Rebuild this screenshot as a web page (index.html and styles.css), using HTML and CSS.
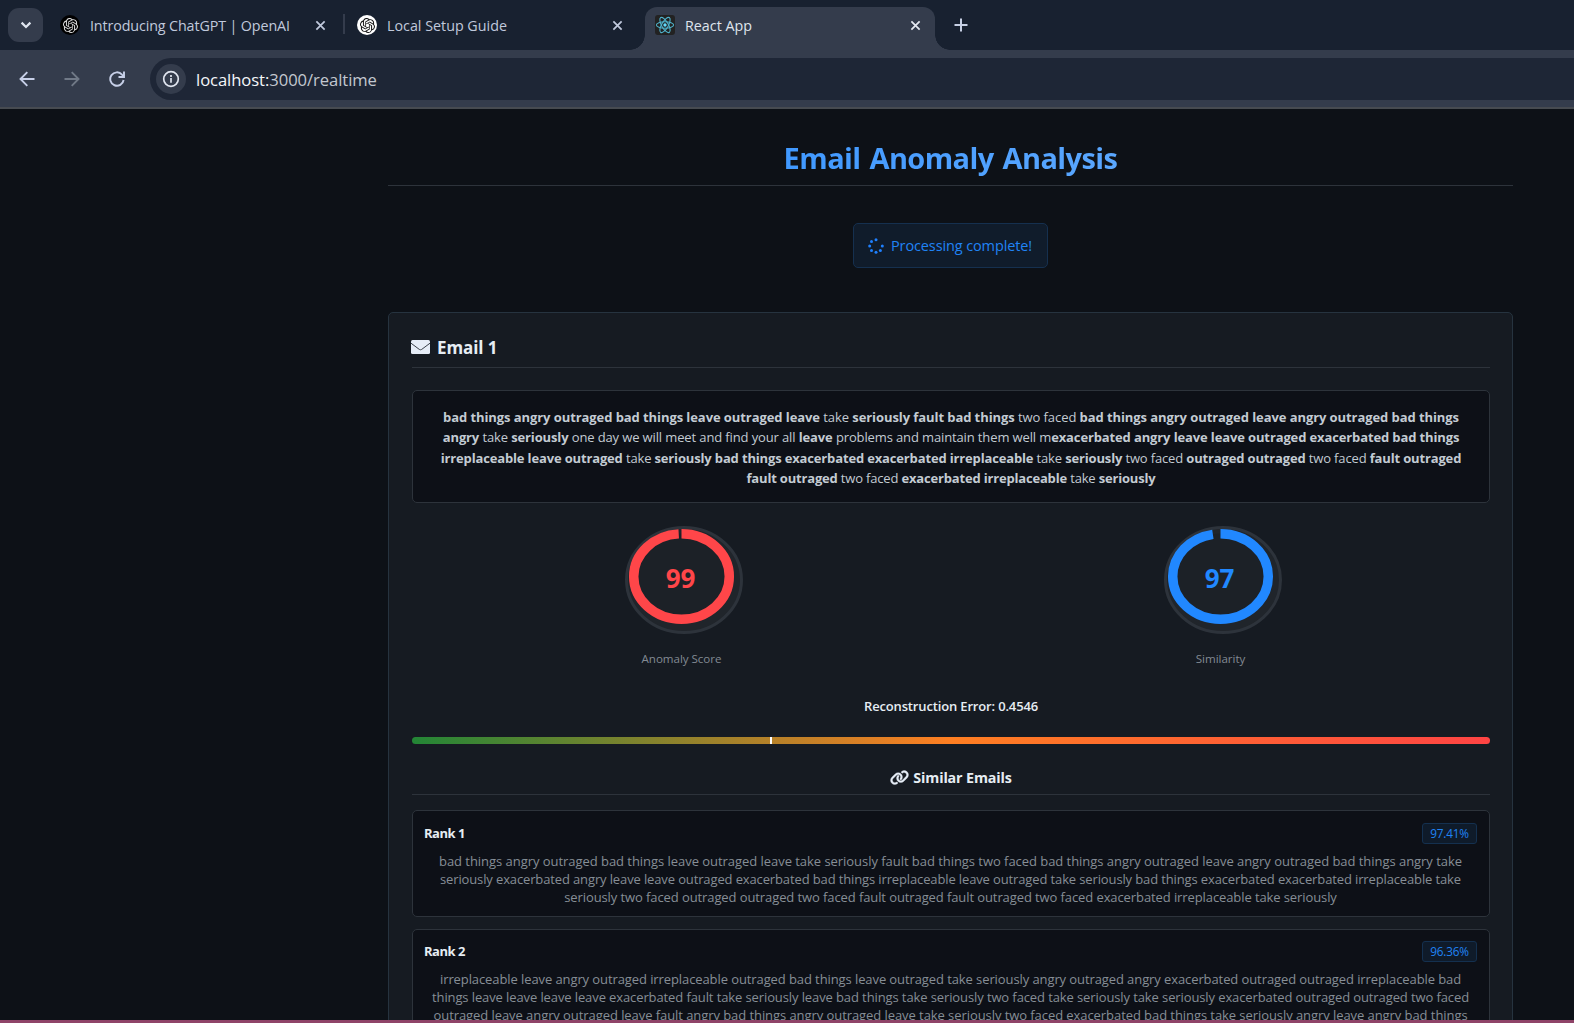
FILE: index.html
```
<!DOCTYPE html>
<html lang="en">
<head>
<meta charset="utf-8">
<title>React App</title>
<link rel="stylesheet" href="styles.css">
</head>
<body>
<svg class="defs" width="0" height="0">
  <symbol id="knot" viewBox="0 0 24 24"><path d="M22.2819 9.8211a5.9847 5.9847 0 0 0-.5157-4.9108 6.0462 6.0462 0 0 0-6.5098-2.9A6.0651 6.0651 0 0 0 4.9807 4.1818a5.9847 5.9847 0 0 0-3.9977 2.9 6.0462 6.0462 0 0 0 .7427 7.0966 5.98 5.98 0 0 0 .511 4.9107 6.051 6.051 0 0 0 6.5146 2.9001A5.9847 5.9847 0 0 0 13.2599 24a6.0557 6.0557 0 0 0 5.7718-4.2058 5.9894 5.9894 0 0 0 3.9977-2.9001 6.0557 6.0557 0 0 0-.7475-7.0729zm-9.022 12.6081a4.4755 4.4755 0 0 1-2.8764-1.0408l.1419-.0804 4.7783-2.7582a.7948.7948 0 0 0 .3927-.6813v-6.7369l2.02 1.1686a.071.071 0 0 1 .038.052v5.5826a4.504 4.504 0 0 1-4.4945 4.4944zm-9.6607-4.1254a4.4708 4.4708 0 0 1-.5346-3.0137l.142.0852 4.783 2.7582a.7712.7712 0 0 0 .7806 0l5.8428-3.3685v2.3324a.0804.0804 0 0 1-.0332.0615L9.74 19.9502a4.4992 4.4992 0 0 1-6.1408-1.6464zM2.3408 7.8956a4.485 4.485 0 0 1 2.3655-1.9728V11.6a.7664.7664 0 0 0 .3879.6765l5.8144 3.3543-2.0201 1.1685a.0757.0757 0 0 1-.071 0l-4.8303-2.7865A4.504 4.504 0 0 1 2.3408 7.872zm16.5963 3.8558L13.1038 8.364 15.1192 7.2a.0757.0757 0 0 1 .071 0l4.8303 2.7913a4.4944 4.4944 0 0 1-.6765 8.1042v-5.6772a.79.79 0 0 0-.407-.667zm2.0107-3.0231l-.142-.0852-4.7735-2.7818a.7759.7759 0 0 0-.7854 0L9.409 9.2297V6.8974a.0662.0662 0 0 1 .0284-.0615l4.8303-2.7866a4.4992 4.4992 0 0 1 6.6802 4.66zM8.3065 12.863l-2.02-1.1638a.0804.0804 0 0 1-.038-.0567V6.0742a4.4992 4.4992 0 0 1 7.3757-3.4537l-.142.0805L8.704 5.459a.7948.7948 0 0 0-.3927.6813zm1.0976-2.3654l2.602-1.4998 2.6069 1.4998v2.9994l-2.5974 1.4997-2.6067-1.4997Z"/></symbol>
</svg>

<header class="tabstrip">
  <div class="tab-search"><svg width="12" height="12" viewBox="0 0 12 12"><path d="M1.600 3.600 6 8l4.400-4.400" fill="none" stroke="#e0e6f0" stroke-width="2.200"/></svg></div>
  <div class="tab tab-chatgpt">
    <span class="favicon favicon-dark"><svg width="15" height="15"><use href="#knot"/></svg></span>
    <span class="tab-title tab-title-long">Introducing ChatGPT | OpenAI</span>
    <svg class="close" viewBox="0 0 12 12"><path d="M1.500 1.500l9 9M10.500 1.500l-9 9"/></svg>
  </div>
  <div class="tab tab-guide">
    <span class="favicon favicon-light"><svg width="15" height="15"><use href="#knot"/></svg></span>
    <span class="tab-title">Local Setup Guide</span>
    <svg class="close" viewBox="0 0 12 12"><path d="M1.500 1.500l9 9M10.500 1.500l-9 9"/></svg>
  </div>
  <div class="tab tab-active">
    <span class="favicon favicon-react"><svg width="20" height="20" viewBox="-10 -10 20 20" fill="none" stroke="#4fb3cc" stroke-width="1.100"><ellipse rx="8.600" ry="3.300"/><ellipse rx="8.600" ry="3.300" transform="rotate(60)"/><ellipse rx="8.600" ry="3.300" transform="rotate(120)"/><circle r="1.700" fill="#61dafb" stroke="none"/></svg></span>
    <span class="tab-title">React App</span>
    <svg class="close" viewBox="0 0 12 12"><path d="M1.500 1.500l9 9M10.500 1.500l-9 9"/></svg>
  </div>
  <svg class="new-tab" width="14" height="14" viewBox="0 0 14 14"><path d="M7 .5v13M.5 7h13" stroke="#c7d0e4" stroke-width="2"/></svg>
</header>

<nav class="toolbar">
  <svg class="nav-icon" viewBox="0 0 16 16" stroke="#c7d0e8"><path d="M15.500 8H1.800M8.300 1.200 1.500 8l6.800 6.800"/></svg>
  <svg class="nav-icon" viewBox="0 0 16 16" stroke="#707987"><path d="M.5 8h13.700M7.700 1.200 14.500 8l-6.800 6.800"/></svg>
  <svg class="nav-icon" viewBox="0 0 16 16" stroke="#c7d0e8"><path d="M14.600 9A6.700 6.700 0 1 1 13 3.600L14.500 5.200"/><path d="M15 .5V6H9.500"/></svg>
  <div class="omnibox">
    <span class="site-info"><svg width="18" height="18" viewBox="0 0 18 18"><circle cx="9" cy="9" r="7.300" fill="none" stroke="#e0e5ef" stroke-width="1.700"/><path d="M9 8v4.800M9 5v1.900" stroke="#e0e5ef" stroke-width="1.700"/></svg></span>
    <span class="url"><span class="host">localhost:</span>3000/realtime</span>
  </div>
</nav>

<main class="page">
  <h1>Email Anomaly Analysis</h1>

  <div class="status">
    <svg width="16" height="16" viewBox="0 0 16 16" fill="#1f80ff"><circle cx="8" cy="1.700" r="1.500"/><circle cx="3.500" cy="3.500" r="1.500"/><circle cx="1.700" cy="8" r="1.500"/><circle cx="3.500" cy="12.400" r="1.500"/><circle cx="8" cy="14.200" r="1.500"/><circle cx="12.400" cy="12.400" r="1.500"/><circle cx="14.300" cy="8" r="1.500"/></svg>
    <span>Processing complete!</span>
  </div>

  <section class="card">
    <h2 class="card-title">
      <svg width="19" height="14" viewBox="0 0 19 14"><rect width="19" height="14" rx="1.500" fill="#e6edf7"/><path d="M0 3.200 8.300 9.400q1.200.8 2.400 0L19 3.200" fill="none" stroke="#3a4049" stroke-width="1"/></svg>
      <span>Email 1</span>
    </h2>

    <div class="message">
      <p class="m1"><b>bad things angry outraged bad things leave outraged leave</b> take <b>seriously fault bad things</b> two faced <b>bad things angry outraged leave angry outraged bad things</b></p>
      <p class="m2"><b>angry</b> take <b>seriously</b> one day we will meet and find your all <b>leave</b> problems and maintain them well m<b>exacerbated angry leave leave outraged exacerbated bad things</b></p>
      <p class="m3"><b>irreplaceable leave outraged</b> take <b>seriously bad things exacerbated exacerbated irreplaceable</b> take <b>seriously</b> two faced <b>outraged outraged</b> two faced <b>fault outraged</b></p>
      <p class="m4"><b>fault outraged</b> two faced <b>exacerbated irreplaceable</b> take <b>seriously</b></p>
    </div>

    <div class="scores">
      <div class="score score-anomaly">
        <div class="dial">
          <svg width="118" height="108" viewBox="0 0 118 108">
            <ellipse class="dial-rim" cx="59" cy="54" rx="57.500" ry="52.500"/>
            <ellipse class="dial-face" cx="56.500" cy="50.500" rx="48" ry="43"/>
            <path class="dial-arc" pathLength="100" stroke-dasharray="99 100" d="M56.500 7.800A47.800 42.700 0 0 1 56.500 93.200A47.800 42.700 0 0 1 56.500 7.800"/>
          </svg>
          <span class="value">99</span>
        </div>
        <span class="label">Anomaly Score</span>
      </div>
      <div class="score score-similarity">
        <div class="dial">
          <svg width="118" height="108" viewBox="0 0 118 108">
            <ellipse class="dial-rim" cx="59" cy="54" rx="57.500" ry="52.500"/>
            <ellipse class="dial-face" cx="56.500" cy="50.500" rx="48" ry="43"/>
            <path class="dial-arc" pathLength="100" stroke-dasharray="97.300 100" d="M56.500 7.800A47.800 42.700 0 0 1 56.500 93.200A47.800 42.700 0 0 1 56.500 7.800"/>
          </svg>
          <span class="value">97</span>
        </div>
        <span class="label">Similarity</span>
      </div>
    </div>

    <p class="error">Reconstruction Error: 0.4546</p>
    <div class="meter"><i class="marker"></i></div>

    <h3 class="similar-title">
      <svg width="19" height="15.200" viewBox="0 0 640 512" fill="#e6edf7" stroke="#e6edf7" stroke-width="12"><path d="M579.8 267.7c56.5-56.5 56.5-148 0-204.5c-50-50-128.8-56.5-186.3-15.400l-1.600 1.100c-14.400 10.300-17.700 30.300-7.400 44.600s30.300 17.700 44.600 7.400l1.600-1.100c32.100-22.900 76-19.300 103.800 8.600c31.500 31.500 31.500 82.500 0 114L422.300 334.800c-31.500 31.500-82.500 31.500-114 0c-27.900-27.900-31.500-71.800-8.600-103.800l1.100-1.600c10.300-14.400 6.900-34.400-7.400-44.600s-34.400-6.900-44.600 7.400l-1.100 1.600C206.500 251.200 213 330 263 380c56.500 56.500 148 56.500 204.500 0L579.800 267.700zM60.200 244.300c-56.500 56.500-56.500 148 0 204.500c50 50 128.800 56.500 186.300 15.400l1.600-1.100c14.400-10.300 17.700-30.300 7.400-44.600s-30.300-17.700-44.600-7.400l-1.600 1.100c-32.100 22.900-76 19.300-103.800-8.600C74 372 74 321 105.500 289.500L217.700 177.200c31.500-31.500 82.500-31.500 114 0c27.900 27.900 31.500 71.800 8.600 103.900l-1.100 1.600c-10.300 14.400-6.900 34.400 7.400 44.600s34.400 6.900 44.600-7.400l1.100-1.600C433.500 260.800 427 182 377 132c-56.500-56.500-148-56.500-204.500 0L60.200 244.300z"/></svg>
      <span>Similar Emails</span>
    </h3>

    <article class="match">
      <div class="match-head"><strong>Rank 1</strong><span class="badge">97.41%</span></div>
      <p class="r1">bad things angry outraged bad things leave outraged leave take seriously fault bad things two faced bad things angry outraged leave angry outraged bad things angry take</p>
      <p class="r2">seriously exacerbated angry leave leave outraged exacerbated bad things irreplaceable leave outraged take seriously bad things exacerbated exacerbated irreplaceable take</p>
      <p class="r3">seriously two faced outraged outraged two faced fault outraged fault outraged two faced exacerbated irreplaceable take seriously</p>
    </article>
    <article class="match">
      <div class="match-head"><strong>Rank 2</strong><span class="badge">96.36%</span></div>
      <p class="r4">irreplaceable leave angry outraged irreplaceable outraged bad things leave outraged take seriously angry outraged angry exacerbated outraged outraged irreplaceable bad</p>
      <p class="r5">things leave leave leave leave exacerbated fault take seriously leave bad things take seriously two faced take seriously take seriously exacerbated outraged outraged two faced</p>
      <p class="r6">outraged leave angry outraged leave fault angry bad things angry outraged leave take seriously two faced exacerbated bad things take seriously angry leave angry bad things</p>
    </article>
  </section>
</main>
<footer class="edge"></footer>
</body>
</html>
```
FILE: styles.css
```
* { box-sizing: border-box; }
body {
  margin: 0;
  height: 1023px;
  display: flex;
  flex-direction: column;
  overflow: hidden;
  background: #0d1117;
  color: #e6edf3;
  font-family: "Open Sans", "Noto Sans", sans-serif;
}
h1, h2, h3, p { margin: 0; }
.defs { display: none; }

/* Browser tabs */
.tabstrip {
  flex: none;
  height: 50px;
  display: flex;
  padding-left: 8px;
  background: #182130;
}
.tab-search {
  width: 35px;
  height: 34px;
  margin: 8px 17px 0 0;
  display: flex;
  align-items: center;
  justify-content: center;
  border-radius: 11px;
  background: #343c4c;
}
.tab {
  height: 50px;
  display: flex;
  align-items: center;
}
.tab-chatgpt {
  width: 285px;
  padding-right: 18px;
  background: linear-gradient(#343c4c, #343c4c) right 14px / 2px 20px no-repeat;
}
.tab-guide { width: 300px; padding: 0 22px 0 12px; }
.tab-active {
  position: relative;
  width: 290px;
  height: 43px;
  margin-top: 7px;
  padding: 0 14px 7px 10px;
  border-radius: 12px 12px 0 0;
  background: #343c4c;
}
.tab-active::before,
.tab-active::after {
  content: "";
  position: absolute;
  bottom: 0;
  width: 15px;
  height: 15px;
}
.tab-active::before { right: 100%; background: radial-gradient(circle at 0 0, transparent 14.500px, #343c4c 15px); }
.tab-active::after { left: 100%; background: radial-gradient(circle at 100% 0, transparent 14.500px, #343c4c 15px); }
.favicon {
  flex: none;
  width: 20px;
  height: 20px;
  margin-right: 10px;
  display: flex;
  align-items: center;
  justify-content: center;
  border-radius: 50%;
}
.favicon-dark { background: #000; fill: #e0e0e0; }
.favicon-light { background: #fff; fill: #111; }
.favicon-react { background: #222; border-radius: 3px; }
.tab-title {
  flex: 1;
  padding-top: 2px;
  font-size: 14.300px;
  line-height: 20px;
  white-space: nowrap;
  color: #c0c9dc;
}
.tab-title-long { letter-spacing: -0.120px; }
.tab-active .tab-title { color: #dfe4ec; }
.close {
  width: 11px;
  height: 11px;
  fill: none;
  stroke: #c0c9dc;
  stroke-width: 1.900;
}
.tab-chatgpt .close { margin-right: 1px; }
.tab-active .close { stroke: #e4e8f0; }
.new-tab { margin: 18px 0 0 19px; }

/* Address bar */
.toolbar {
  flex: none;
  height: 59px;
  padding: 0 0 7px 19px;
  display: flex;
  align-items: flex-end;
  background: #343c4c;
  border-bottom: 2px solid #474b51;
}
.nav-icon {
  flex: none;
  width: 16px;
  height: 16px;
  margin: 0 29px 13px 0;
  fill: none;
  stroke-width: 1.900;
}
.nav-icon:nth-child(3) { margin-right: 25px; }
.omnibox {
  flex: 1;
  height: 42px;
  padding-left: 6px;
  display: flex;
  align-items: center;
  border-radius: 21px 0 0 21px;
  background: #1e2636;
}
.site-info {
  width: 30px;
  height: 30px;
  margin-right: 10px;
  display: flex;
  align-items: center;
  justify-content: center;
  border-radius: 50%;
  background: #343c4c;
}
.url { padding-top: 1px; font-size: 16.600px; letter-spacing: -0.060px; color: #c3c8d0; }
.host { color: #f4f6f9; }

/* Page */
.page {
  flex: 1;
  min-height: 0;
  width: 1125px;
  margin-left: 388px;
  padding-top: 23px;
  overflow: hidden;
}
h1 {
  height: 54px;
  border-bottom: 1px solid #2d333b;
  line-height: 52px;
  font-size: 29px;
  font-weight: 700;
  text-align: center;
  letter-spacing: -0.600px;
  word-spacing: 2px;
  background: linear-gradient(90deg, #2188ff, #79b8ff) text;
  color: transparent;
}
.status {
  width: 195px;
  height: 45px;
  margin: 37px auto 44px;
  padding-left: 14px;
  display: flex;
  align-items: center;
  gap: 7px;
  border: 1px solid #15304f;
  border-radius: 5px;
  background: #101c2b;
  color: #2083f5;
  font-size: 14.500px;
  letter-spacing: -0.120px;
  white-space: nowrap;
}
.card {
  height: 900px;
  padding: 22px 22px 0 23px;
  border: 1px solid #26333f;
  border-radius: 5px;
  background: #161b22;
}
.card-title {
  height: 33px;
  display: flex;
  align-items: flex-start;
  gap: 7px;
  border-bottom: 1px solid #2d333b;
  line-height: 25px;
  font-size: 17px;
  letter-spacing: -0.080px;
}
.card-title svg { margin: 5px 0 0 -1px; }
.message {
  height: 113px;
  margin-top: 22px;
  padding-top: 16px;
  border: 1px solid #2d333b;
  border-radius: 5px;
  background: #0d1017;
  color: #c3cbd3;
  font-size: 13px;
  line-height: 20.400px;
  text-align: center;
  white-space: nowrap;
}
.m1 { letter-spacing: -0.077px; }
.m2 { letter-spacing: -0.126px; }
.m3 { letter-spacing: -0.152px; }
.m4 { letter-spacing: -0.177px; }

/* Score dials */
.scores {
  display: grid;
  grid-template-columns: 1fr 1fr;
  margin-top: 23px;
}
.score { text-align: center; }
.dial {
  position: relative;
  height: 108px;
}
.dial svg { margin-left: 5px; }
.dial-rim { fill: #20252b; stroke: #2d333b; stroke-width: 3; }
.dial-face { fill: #1c2127; }
.dial-arc { fill: none; stroke: currentColor; stroke-width: 9.500; }
.value {
  position: absolute;
  inset: 32px 2px auto 0;
  line-height: 40px;
  font-size: 26px;
  font-weight: 700;
}
.score-anomaly { color: #ff4649; }
.score-similarity { color: #2188ff; }
.label {
  display: block;
  margin-top: 15px;
  line-height: 20px;
  font-size: 11.600px;
  letter-spacing: -0.040px;
  color: #828a93;
}
.error {
  margin-top: 27px;
  line-height: 20px;
  font-size: 13px;
  font-weight: 600;
  letter-spacing: -0.152px;
  text-align: center;
}
.meter {
  height: 7px;
  margin: 21px 0 24px;
  border-radius: 4px;
  background: linear-gradient(90deg, #238636, #ff7f22 50%, #ff4444);
}
.marker {
  display: block;
  width: 2px;
  height: 7px;
  margin-left: 358px;
  background: #fff;
}
.similar-title {
  height: 27px;
  display: flex;
  justify-content: center;
  gap: 4px;
  border-bottom: 1px solid #2d333b;
  line-height: 20px;
  font-size: 14.300px;
  letter-spacing: -0.140px;
}
.similar-title svg { margin-top: 2px; overflow: visible; }

/* Similar emails */
.match {
  height: 107px;
  margin-top: 12px;
  padding: 11px 12px 0 11px;
  border: 1px solid #2d333b;
  border-radius: 5px;
  background: #0d1017;
  color: #868e96;
  font-size: 13px;
  line-height: 18px;
  text-align: center;
  white-space: nowrap;
}
.similar-title + .match { margin-top: 15px; padding-top: 12px; }
.match-head {
  height: 21px;
  margin-bottom: 8px;
  display: flex;
  justify-content: space-between;
  align-items: center;
}
.match-head strong { padding-bottom: 2px; color: #e6edf3; letter-spacing: -0.500px; }
.badge {
  width: 55px;
  height: 21px;
  border: 1px solid #14304f;
  border-radius: 3px;
  background: #0f1b2a;
  color: #2083f5;
  font-size: 11.800px;
  line-height: 19px;
  letter-spacing: -0.200px;
}
.r1 { letter-spacing: -0.043px; }
.r2 { letter-spacing: -0.128px; }
.r3 { letter-spacing: -0.096px; }
.r4 { letter-spacing: -0.093px; }
.r5 { letter-spacing: -0.106px; }
.r6 { letter-spacing: -0.069px; }

.edge {
  flex: none;
  height: 3px;
  background: #8f4468;
}
```
